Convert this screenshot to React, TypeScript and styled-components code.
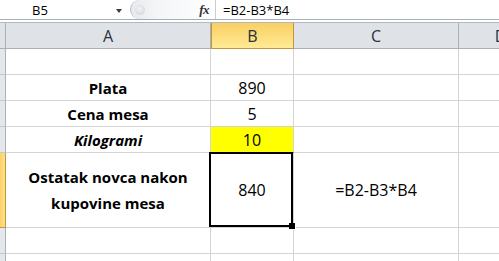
import React from "react";
import styled, { createGlobalStyle, css } from "styled-components";

const GlobalStyle = createGlobalStyle`
	html, body {
		margin: 0;
		padding: 0;
		background: #ffffff;
	}
	body {
		width: 499px;
		height: 261px;
		overflow: hidden;
		font-family: "Open Sans", "Liberation Sans", sans-serif;
	}
`;

const Page = styled.div`
	width: 499px;
	height: 261px;
	overflow: hidden;
	background: #ffffff;
`;

const FormulaBar = styled.div`
	display: flex;
	align-items: center;
	height: 19px;
	border-bottom: 1px solid #a9afb7;
	background: #ffffff;
`;

const NameBox = styled.div`
	width: 110px;
	padding-left: 32px;
	box-sizing: border-box;
	font-size: 13px;
	color: #000;
`;

const DropArrow = styled.div`
	width: 0;
	height: 0;
	margin-left: 6px;
	margin-top: 2px;
	border-left: 3.5px solid transparent;
	border-right: 3.5px solid transparent;
	border-top: 4px solid #3c3c3c;
`;

const Pill = styled.div`
	display: flex;
	align-items: center;
	justify-content: space-between;
	margin-left: 8px;
	width: 85px;
	height: 19px;
	box-sizing: border-box;
	padding: 0 6px 0 4px;
	border-left: 1px solid #b9bec5;
	border-radius: 11px 0 0 11px;
	background: linear-gradient(to right, #e6e9ed 0%, #f4f5f7 30%, #ffffff 100%);
`;

const Knob = styled.div`
	width: 10px;
	height: 10px;
	border-radius: 50%;
	background: radial-gradient(circle at 45% 40%, #f4f4f4 0%, #d7dadf 70%, #c4c8ce 100%);
`;

const Fx = styled.span`
	font-family: "Liberation Serif", "DejaVu Serif", serif;
	font-style: italic;
	font-weight: bold;
	font-size: 13px;
	color: #333;
	letter-spacing: -0.5px;
`;

const FormulaText = styled.div`
	height: 19px;
	display: flex;
	align-items: center;
	border-left: 1px solid #c9cdd2;
	padding-left: 7px;
	font-size: 13px;
	color: #000;
`;

const Sheet = styled.div`
	display: grid;
	grid-template-columns: 6px 205px 83px 165px 84px;
	grid-template-rows: 26px 26px 26px 26px 26px 75px 26px 26px;
	margin-top: 2px;
	border-top: 1px solid #b3b9c1;
`;

const Cell = styled.div<{ $fill?: string; $bold?: boolean; $italic?: boolean; $bottom?: string }>`
	display: flex;
	align-items: center;
	justify-content: center;
	text-align: center;
	box-sizing: border-box;
	border-right: 1px solid #d4d4d4;
	border-bottom: 1px solid ${(p) => p.$bottom || "#d4d4d4"};
	background: ${(p) => p.$fill || "#ffffff"};
	font-size: ${(p) => (p.$bold ? "15px" : "16px")};
	font-weight: ${(p) => (p.$bold ? 700 : 400)};
	font-style: ${(p) => (p.$italic ? "italic" : "normal")};
	line-height: 26px;
	color: #000;
	padding: 0 4px;
`;

const ColHead = styled.div<{ $active?: boolean }>`
	display: flex;
	align-items: center;
	justify-content: center;
	box-sizing: border-box;
	font-size: 16px;
	color: #27313c;
	border-right: 1px solid #a9b0b8;
	border-bottom: 1px solid #a9b0b8;
	background: #dfe3e8;
	${(p) =>
		p.$active &&
		css`
			background: linear-gradient(to bottom, #f8cf63 0%, #fcdd7c 50%, #ffeb94 100%);
			border: 1px solid #c4953f;
			border-top: none;
		`}
`;

const RowHead = styled.div<{ $active?: boolean }>`
	box-sizing: border-box;
	border-right: 1px solid #a9b0b8;
	border-bottom: 1px solid #c4c9cf;
	background: ${(p) => (p.$active ? "linear-gradient(to right, #f9d267, #fee08a)" : "#e4e7eb")};
	${(p) =>
		p.$active &&
		css`
			border-right-color: #c4953f;
			border-bottom-color: #c4953f;
		`}
`;

const Corner = styled(RowHead)`
	border-bottom: 1px solid #a9b0b8;
	background: #dfe3e8;
`;

const SelectedCell = styled(Cell)`
	position: relative;
	&::after {
		content: "";
		position: absolute;
		top: -1px;
		left: -2px;
		right: 0;
		bottom: 0;
		border: 2px solid #000;
		pointer-events: none;
	}
`;

const FillHandle = styled.span`
	position: absolute;
	right: -3px;
	bottom: -3px;
	width: 6px;
	height: 6px;
	background: #000;
	border: 1px solid #fff;
	border-top: none;
	border-left: none;
	z-index: 2;
`;

const WrapText = styled.span`
	display: block;
	padding: 0 16px;
`;

const blankRow = () => (
	<>
		<Cell />
		<Cell />
		<Cell />
		<Cell />
	</>
);

const App = () => {
	return (
		<Page>
			<GlobalStyle />
			<FormulaBar>
				<NameBox>B5</NameBox>
				<DropArrow />
				<Pill>
					<Knob />
					<Fx>fx</Fx>
				</Pill>
				<FormulaText>=B2-B3*B4</FormulaText>
			</FormulaBar>
			<Sheet>
				<Corner />
				<ColHead>A</ColHead>
				<ColHead $active>B</ColHead>
				<ColHead>C</ColHead>
				<ColHead>D</ColHead>

				<RowHead />
				{blankRow()}

				<RowHead />
				<Cell $bold>Plata</Cell>
				<Cell>890</Cell>
				<Cell />
				<Cell />

				<RowHead />
				<Cell $bold>Cena mesa</Cell>
				<Cell>5</Cell>
				<Cell />
				<Cell />

				<RowHead />
				<Cell $bold $italic>Kilogrami</Cell>
				<Cell $fill="#ffff00" $bottom="#1f3fff">10</Cell>
				<Cell />
				<Cell />

				<RowHead $active />
				<Cell $bold>
					<WrapText>Ostatak novca nakon kupovine mesa</WrapText>
				</Cell>
				<SelectedCell>
					840
					<FillHandle />
				</SelectedCell>
				<Cell>=B2-B3*B4</Cell>
				<Cell />

				<RowHead />
				{blankRow()}

				<RowHead />
				{blankRow()}
			</Sheet>
		</Page>
	);
};

export default App;
